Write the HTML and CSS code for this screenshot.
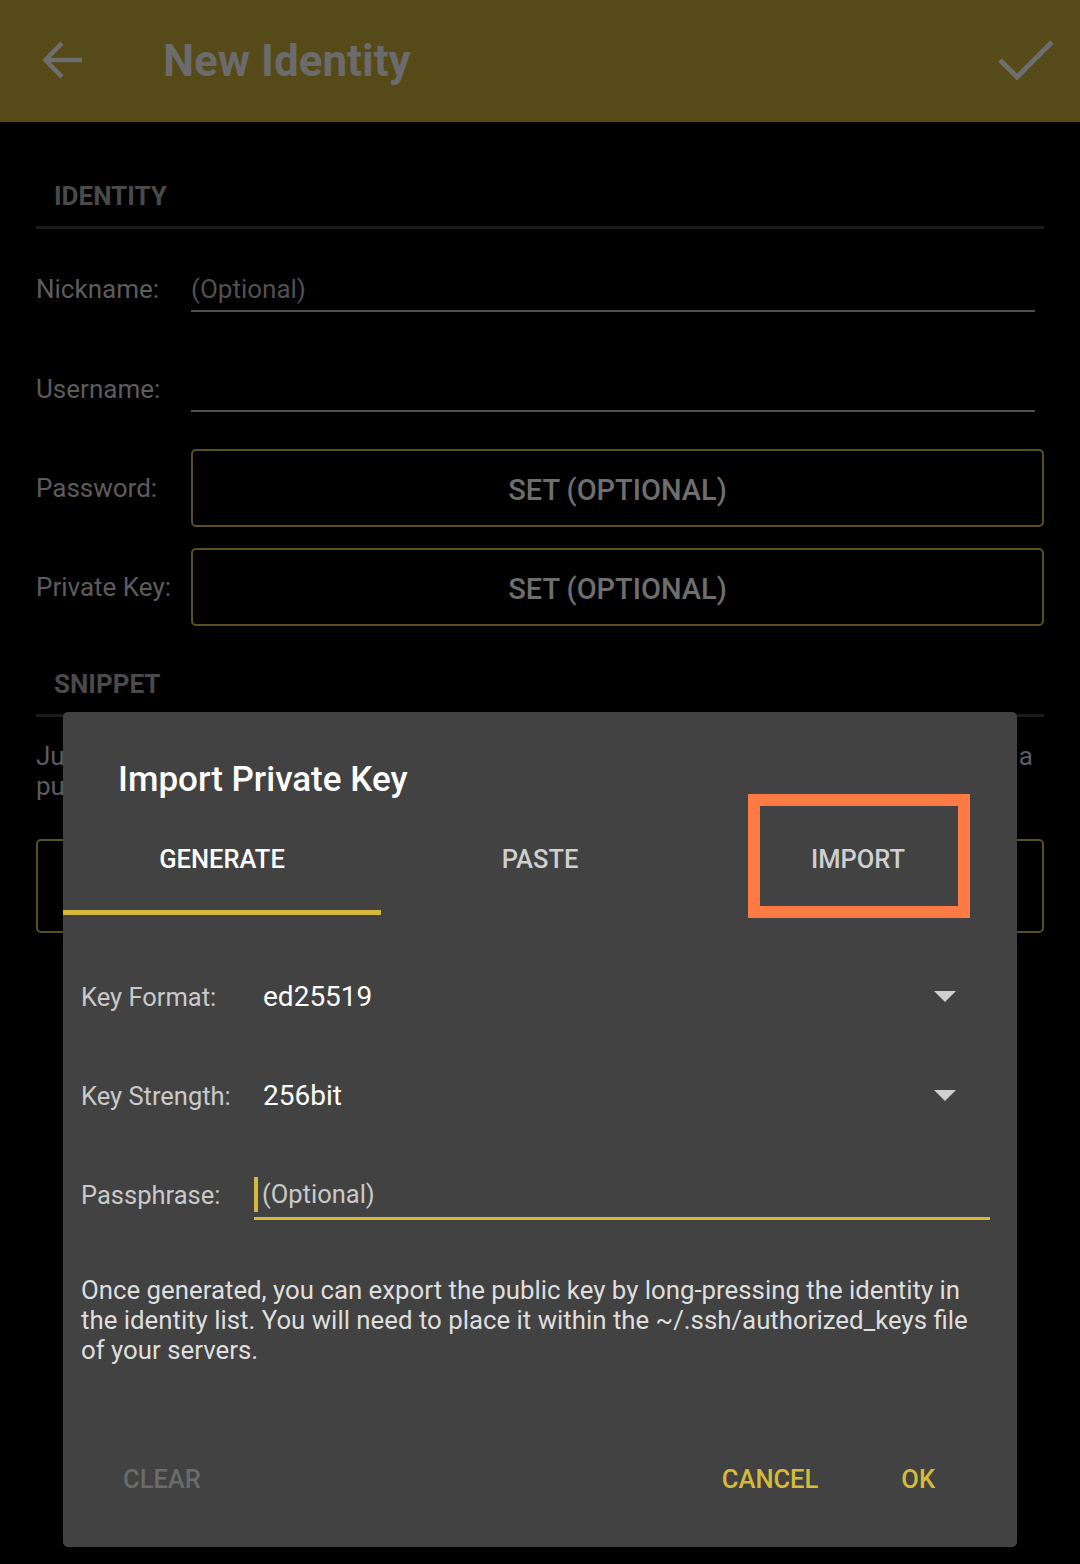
FILE: index.html
```html
<!DOCTYPE html>
<html lang="en">
<head>
<meta charset="utf-8">
<title>New Identity</title>
<link rel="stylesheet" href="styles.css">
</head>
<body>
<div class="screen">
  <header class="appbar">
    <svg class="back" width="40" height="40" viewBox="0 0 40 40"><path d="M19 3 L2.5 20 L19 37 M2.5 20 H39" fill="none" stroke="#6e6e6e" stroke-width="4.5"/></svg>
    <h1 class="title">New Identity</h1>
    <svg class="check" width="56" height="40" viewBox="0 0 56 40"><path d="M2 20 L19 37 L54 2" fill="none" stroke="#6e6e6e" stroke-width="5"/></svg>
  </header>

  <main class="content">
    <div class="section-head">IDENTITY</div>
    <div class="divider"></div>

    <div class="row first">
      <span class="label">Nickname:</span>
      <div class="field"><span class="placeholder">(Optional)</span></div>
    </div>
    <div class="row">
      <span class="label">Username:</span>
      <div class="field"></div>
    </div>
    <div class="row btn-row">
      <span class="label">Password:</span>
      <div class="outline-btn">SET (OPTIONAL)</div>
    </div>
    <div class="row btn-row second">
      <span class="label">Private Key:</span>
      <div class="outline-btn">SET (OPTIONAL)</div>
    </div>

    <div class="section-head snippet">SNIPPET</div>
    <div class="divider"></div>
    <p class="snippet-text"><span class="just">Just run this command on your server to add a</span><span>public key to the identity</span></p>
    <div class="outline-btn wide"></div>
  </main>

  <div class="dialog">
    <h2 class="dlg-title">Import Private Key</h2>
    <div class="tabs">
      <div class="tab active">GENERATE</div>
      <div class="tab">PASTE</div>
      <div class="tab">IMPORT</div>
    </div>
    <div class="highlight"></div>

    <div class="form">
      <div class="frow">
        <span class="flabel">Key Format:</span>
        <div class="spinner"><span class="value">ed25519</span><span class="tri"></span></div>
      </div>
      <div class="frow">
        <span class="flabel">Key Strength:</span>
        <div class="spinner"><span class="value">256bit</span><span class="tri"></span></div>
      </div>
      <div class="frow">
        <span class="flabel">Passphrase:</span>
        <div class="pfield"><span class="cursor"></span><span class="pplace">(Optional)</span></div>
      </div>
    </div>

    <p class="desc">Once generated, you can export the public key by long-pressing the identity in the identity list. You will need to place it within the ~/.ssh/authorized_keys file of your servers.</p>

    <div class="actions">
      <span class="act disabled">CLEAR</span>
      <span class="spacer"></span>
      <span class="act">CANCEL</span>
      <span class="act ok">OK</span>
    </div>
  </div>
</div>
</body>
</html>
```

FILE: styles.css
```css
* { box-sizing: border-box; }
html, body { margin: 0; padding: 0; background: #000; }
body { font-family: Roboto, "Noto Sans", sans-serif; }

.screen {
  position: relative;
  width: 1080px;
  height: 1564px;
  overflow: hidden;
  background: #000;
}

.appbar {
  height: 122px;
  background: #554a18;
  display: flex;
  align-items: center;
  padding: 0 26px 0 43px;
}
.back { flex: none; margin-top: -3px; }
.title {
  margin: 0 0 0 80px;
  font-size: 44px;
  font-weight: 700;
  color: #6b6b6b;
  flex: 1;
  line-height: 1;
}
.check { flex: none; margin-top: -3px; }

.content { padding: 0 36px; }

.section-head {
  height: 104px;
  display: flex;
  align-items: flex-end;
  padding: 0 0 15px 18px;
  font-size: 26px;
  font-weight: 700;
  color: #4a4a4a;
  line-height: 30px;
}
.section-head.snippet { height: 88px; padding-bottom: 15px; }
.divider { height: 3px; background: #1b1b1b; }

.row {
  display: flex;
  align-items: center;
  height: 100px;
}
.row.first { margin-top: 10px; }
.label {
  width: 155px;
  flex: none;
  font-size: 26px;
  color: #5c5c5c;
}
.field {
  flex: 1;
  height: 46px;
  margin-right: 9px;
  border-bottom: 2px solid #4f4f4f;
  display: flex;
  align-items: center;
  padding-top: 2px;
}
.placeholder { font-size: 26px; color: #505050; }

.btn-row { height: 78px; margin-top: 10px; }
.btn-row.second { margin-top: 21px; }
.outline-btn {
  flex: 1;
  height: 78px;
  border: 2px solid #5a4f20;
  border-radius: 5px;
  display: flex;
  align-items: center;
  justify-content: center;
  padding-top: 3px;
  font-size: 29px;
  font-weight: 500;
  color: #6e6e6e;
}
.outline-btn.wide { height: 94px; margin-top: 38px; }

.snippet-text {
  margin: 24px 0 0;
  font-size: 26px;
  line-height: 30px;
  color: #5c5c5c;
  display: flex;
  flex-direction: column;
}
.snippet-text .just { text-align: justify; text-align-last: justify; padding-right: 11px; }

/* dialog */
.dialog {
  position: absolute;
  left: 63px;
  top: 712px;
  width: 954px;
  height: 835px;
  background: #424242;
  border-radius: 5px;
}
.dlg-title {
  margin: 0;
  padding: 48px 0 0 55px;
  height: 88px;
  font-size: 35px;
  font-weight: 500;
  line-height: 40px;
  color: #fff;
}
.tabs {
  display: flex;
  margin-top: 7px;
}
.tab {
  flex: 1;
  height: 108px;
  padding-top: 37px;
  text-align: center;
  font-size: 25.5px;
  font-weight: 500;
  line-height: 30px;
  color: #cfcfcf;
}
.tab.active {
  color: #fff;
  border-bottom: 5px solid #d4b93a;
}
.highlight {
  position: absolute;
  left: 685px;
  top: 82px;
  width: 222px;
  height: 124px;
  border: 12px solid #fd7a45;
}

.form { padding: 32px 27px 0 18px; }
.frow {
  display: flex;
  align-items: center;
  height: 99px;
}
.flabel {
  width: 173px;
  flex: none;
  font-size: 25.5px;
  color: #c9c9c9;
}
.spinner {
  flex: 1;
  display: flex;
  align-items: center;
  padding-left: 9px;
}
.value { flex: 1; font-size: 28px; color: #fff; }
.tri {
  width: 0;
  height: 0;
  border-left: 11px solid transparent;
  border-right: 11px solid transparent;
  border-top: 11px solid #d0d0d0;
  margin-right: 34px;
}
.pfield {
  flex: 1;
  height: 48px;
  margin-top: 2px;
  border-bottom: 3px solid #d4b93a;
  display: flex;
  align-items: center;
}
.cursor {
  width: 4px;
  height: 35px;
  background: #d4b93a;
  margin-right: 4px;
}
.pplace { font-size: 25.5px; color: #c9c9c9; }

.desc {
  margin: 31px 27px 0 18px;
  font-size: 25.8px;
  line-height: 30px;
  color: #dedede;
}

.actions {
  display: flex;
  align-items: center;
  margin-top: 99px;
  padding: 0 82px 0 60px;
  height: 30px;
}
.act {
  font-size: 25.5px;
  font-weight: 500;
  color: #d6bb3b;
}
.act.disabled { color: #6b6b6b; }
.spacer { flex: 1; }
.act.ok { margin-left: 83px; }
```
